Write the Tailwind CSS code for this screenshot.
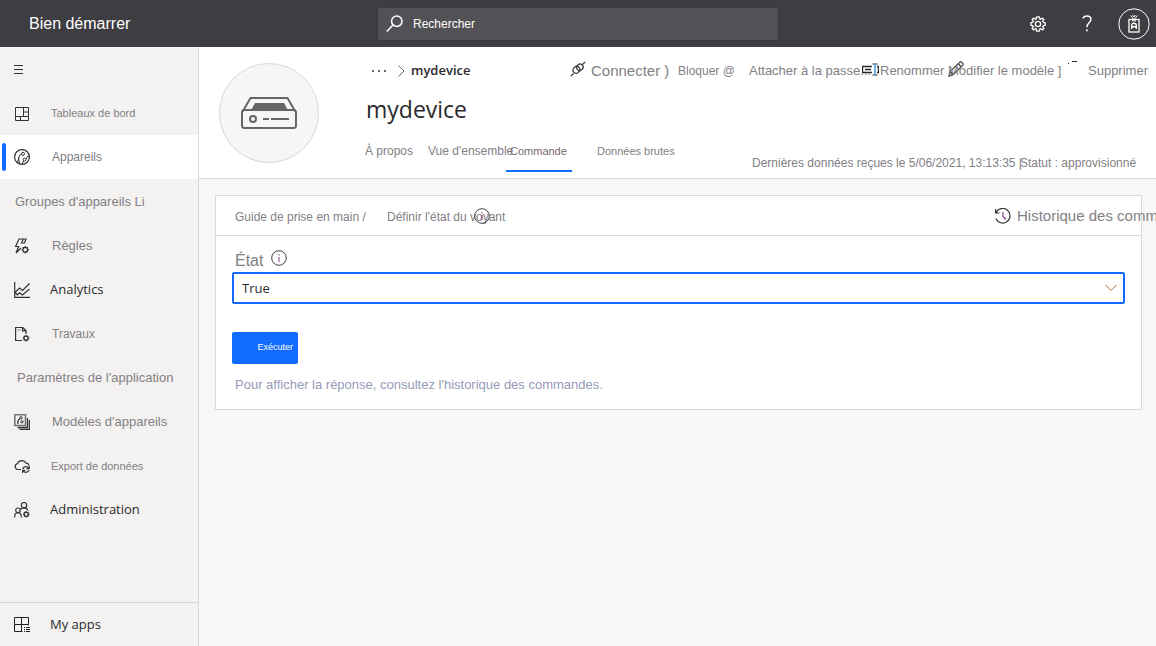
<!DOCTYPE html>
<html lang="fr">
<head>
<meta charset="utf-8">
<title>Bien démarrer</title>
<script src="https://cdn.jsdelivr.net/npm/@tailwindcss/browser@4"></script>
</head>
<body class="flex h-screen flex-col overflow-hidden bg-[#f7f7f7] font-['Liberation_Sans',sans-serif] text-[13px] whitespace-nowrap text-[#828085]">

<header class="flex h-[47px] shrink-0 items-center bg-[#3e3d41] pr-[6px] pl-[29px] text-white">
  <h1 class="w-[349px] text-base">Bien démarrer</h1>
  <label class="flex h-8 w-[400px] items-center gap-[10px] rounded-xs bg-[#525155] pl-2 shadow-sm">
    <svg class="size-[17px]" viewBox="0 0 17 17" fill="none" stroke="#fff" stroke-width="1.5" aria-hidden="true"><circle cx="10.8" cy="6.2" r="5.2"/><path d="M7 10 .8 16.4"/></svg>
    <input type="search" placeholder="Rechercher" aria-label="Rechercher" class="min-w-0 flex-1 bg-transparent text-xs outline-none placeholder:text-white">
  </label>
  <div class="ml-auto flex items-center">
    <button class="mr-9" aria-label="Paramètres">
      <svg class="size-4" viewBox="0 0 18 18" fill="none" stroke="#fff" stroke-width="1.5" stroke-linejoin="round"><path d="m7.5 1-.4 2.2-1.2.5L4 2.4 2.4 4l1.3 1.9-.5 1.2L1 7.5v3l2.2.4.5 1.2L2.4 14 4 15.6l1.9-1.3 1.2.5.4 2.2h3l.4-2.2 1.2-.5 1.9 1.3 1.6-1.6-1.3-1.9.5-1.2 2.2-.4v-3l-2.2-.4-.5-1.2L15.600 4 14 2.400l-1.900 1.300-1.200-.500L10.500 1z"/><circle cx="9" cy="9" r="3"/></svg>
    </button>
    <button class="mr-[26px]" aria-label="Aide">
      <svg class="h-[17px] w-[10px]" viewBox="0 0 10 17" fill="none" stroke="#fff" stroke-width="1.5"><path d="M1 3.500C1.500 1.800 3 .9 4.900.9c2.300 0 4 1.300 4 3.400 0 3.500-4 3.700-4 8"/><path d="M4.900 14.400v1.900" stroke-width="1.8"/></svg>
    </button>
    <button aria-label="Compte">
      <svg class="size-8" viewBox="0 0 32 32" fill="none" stroke="#fff"><circle cx="16" cy="16" r="15.2"/><rect x="11" y="11.500" width="10" height="12.500" stroke-width="1.3"/><path d="m12.500 7.500 3.500 4 3.500-4M14.500 7l1.500 2 1.500-2M14 12.800h4"/><path d="M13.700 21v-3.500c0-1.700.8-2.200 2.300-2.200s2.300.5 2.300 2.200V21M13.700 18.700h4.600" stroke-width="1.4"/></svg>
    </button>
  </div>
</header>

<div class="flex min-h-0 flex-1">
  <nav class="flex w-[199px] shrink-0 flex-col border-r border-[#dadadc] bg-[#f3f2f1]" aria-label="Navigation principale">
    <button class="flex h-11 items-center pl-[14px]" aria-label="Menu">
      <svg class="h-[11px] w-[9px]" viewBox="0 0 9 11" stroke="#333" aria-hidden="true"><path d="M0 1.500h9M0 5.500h9M0 9.500h9"/></svg>
    </button>
    <a href="#" class="flex h-11 items-center gap-[21px] pt-px pl-[14px] text-[11px]">
      <svg class="size-4" viewBox="0 0 16 16" fill="none" stroke="#333" aria-hidden="true"><path d="M1.500 1.500h13v13h-13zM1.500 10.500h13M9.500 1.500v9M9.500 6h5M6.500 10.500v4"/></svg>
      <span>Tableaux de bord</span>
    </a>
    <a href="#" aria-current="page" class="flex h-11 items-center bg-white pl-[2px] text-xs">
      <span class="h-7 w-1 rounded-sm bg-[#126bff]"></span>
      <svg class="mr-[22px] ml-2 size-4" viewBox="0 0 16 16" fill="none" stroke="#333" aria-hidden="true"><circle cx="8" cy="8" r="7.400" stroke-width="1.2"/><circle cx="9" cy="4.800" r="1.500"/><circle cx="10.500" cy="10.600" r="1.500"/><path d="M7.600 5.300C5 6 4.500 8 4.700 10.500l1 4M5 8.500l-1.500 5M12 10l1.500-2.500h2M9.500 12l-1.500 3"/></svg>
      <span>Appareils</span>
    </a>
    <h2 class="flex h-[45px] items-center pl-[15px]">Groupes d'appareils Li</h2>
    <a href="#" class="flex h-11 items-center gap-[22px] pl-[14px]">
      <svg class="size-4" viewBox="0 0 16 16" fill="none" stroke="#333" stroke-width="1.2" aria-hidden="true"><path d="M11 5h-.5L12 1H5L1.600 8.500h3L2 15l5-5M11 5H7.500L9.300 1"/><circle cx="11.200" cy="11.700" r="2.300"/><path d="M11.200 8v1.400M11.200 14v1.500M7.700 11.700h1.200M13.500 11.700h1.500M8.700 9.200l.9.900M12.800 13.300l1 1M8.700 14.200l.9-.9M12.800 10.100l1-1"/></svg>
      <span>Règles</span>
    </a>
    <a href="#" class="flex h-11 items-center gap-5 pl-[14px] font-['Open_Sans',sans-serif] text-[#2b2a2e]">
      <svg class="size-4" viewBox="0 0 16 16" fill="none" stroke="#333" stroke-width="1.2" aria-hidden="true"><path d="M.7 0v15.300H16M1 10.500 5.500 6l3 2.500L15.500 1.500M1 10.500l2.500 2.300 2-2 3 2.200 7-6"/></svg>
      <span>Analytics</span>
    </a>
    <a href="#" class="flex h-11 items-center gap-[22px] pl-[14px] text-xs">
      <svg class="size-4" viewBox="0 0 16 16" fill="none" stroke="#333" stroke-width="1.2" aria-hidden="true"><path d="M8 14.500H1.600v-13h7.200L12 4.500V8M8.500 1.500v3.300H12M3.500 4h1M5.500 4h1"/><circle cx="12" cy="12.200" r="2"/><path d="M12 9v1.200M12 14.200v1.300M8.900 12.200H10M14 12.200h1.300M9.800 10l.8.800M13.400 13.600l.8.800M9.800 14.400l.8-.8M13.400 10.800l.8-.8"/></svg>
      <span>Travaux</span>
    </a>
    <h2 class="flex h-11 items-center pl-[17px]">Paramètres de l'application</h2>
    <a href="#" class="flex h-11 items-center gap-[22px] pl-[14px]">
      <svg class="size-4" viewBox="0 0 16 16" fill="none" stroke="#333" aria-hidden="true"><path d="M.8.800h10.700v10.700H.8z" stroke="#777" stroke-width="1.6"/><circle cx="7" cy="3.800" r="1.200"/><circle cx="8" cy="7.800" r="1.200"/><path d="M6 4.500C4 5.500 3.500 7 4 10M13.500 4v9.500H3.500M15.500 6v9.500H5.500" stroke-width="1.3"/></svg>
      <span>Modèles d'appareils</span>
    </a>
    <a href="#" class="flex h-11 items-center gap-[21px] pl-[14px] text-[11px]">
      <svg class="size-4" viewBox="0 0 16 16" fill="none" stroke="#333" stroke-width="1.2" aria-hidden="true"><path d="M7 11.500H3.800A3 3 0 0 1 3.500 5.600 4.600 4.600 0 0 1 12 5.200a3 3 0 0 1 3 2.500"/><path d="M8.800 11c.4-1.500 1.700-2.300 3-2.300 1.200 0 2.200.5 2.800 1.600M15.200 8v2.700h-2.700M15 12c-.5 1.500-1.700 2.300-3 2.300-1.200 0-2.200-.6-2.800-1.600M8.600 15v-2.700h2.700"/></svg>
      <span>Export de données</span>
    </a>
    <a href="#" class="flex h-11 items-center gap-5 pl-[14px] font-['Open_Sans',sans-serif] text-[#2b2a2e]">
      <svg class="size-4" viewBox="0 0 16 16" fill="none" stroke="#333" stroke-width="1.2" aria-hidden="true"><circle cx="10" cy="3.200" r="2.700"/><circle cx="4" cy="8.300" r="2.300"/><path d="M.6 15.500c0-3.200 1.200-4.800 3.400-4.800s3.400 1.600 3.400 4.800M6.500 7.500C7.500 6.300 8.600 5.900 10 5.900c2 0 3.300 1 3.800 2.600"/><circle cx="12.200" cy="12.300" r="2"/><path d="M12.200 9v1.300M12.200 14.300v1.300M9 12.300h1.200M14.200 12.300h1.400M9.900 10l.9.900M13.600 13.700l.9.900M9.900 14.600l.9-.9M13.600 10.900l.9-.9"/></svg>
      <span>Administration</span>
    </a>
    <a href="#" class="mt-auto flex h-11 items-center gap-5 border-t border-[#d6d5d6] pt-px pl-[14px] font-['Open_Sans',sans-serif] text-[#2b2a2e]">
      <svg class="size-4" viewBox="0 0 16 16" fill="none" stroke="#222" aria-hidden="true"><path d="M8.500 14.500h-8v-14h14v7h-14M7.500.5v14M14.500 7.500v1M10 10.500h1M12 10.500h4M10 12.500h1M12 12.500h4M10 14.500h1M12 14.500h4"/></svg>
      <span>My apps</span>
    </a>
  </nav>

  <main class="flex min-w-0 flex-1 flex-col">
    <section class="flex h-[132px] shrink-0 border-b border-[#dadadc] bg-white pl-5">
      <div class="mt-4 flex size-[100px] shrink-0 items-center justify-center rounded-full border border-[#d8d8d8] bg-[#f6f6f6]">
        <svg class="h-8 w-14" viewBox="0 0 56 32" fill="none" stroke="#666" stroke-width="2" aria-hidden="true"><rect x="1" y="13" width="54" height="18" rx="2.500"/><path d="M2 14 9.500 1h37L54 14"/><path d="M10 13.500 14 6h29l4 7.500z" fill="#666" stroke="none"/><circle cx="12" cy="22" r="3"/><path d="M22 22h6M30 22h18"/></svg>
      </div>
      <div class="ml-[46px] flex min-w-0 flex-1 flex-col">
        <div class="flex h-[46px] items-center pt-[2px]">
          <div class="flex items-center pl-[6px] font-['Open_Sans',sans-serif]">
            <button aria-label="Plus">
              <svg class="h-1 w-4" viewBox="0 0 16 4" fill="#666"><path d="M1 1h2v2H1zM7 1h2v2H7zM13 1h2v2h-2z"/></svg>
            </button>
            <svg class="ml-[11px] h-3 w-[7px]" viewBox="0 0 7 12" fill="none" stroke="#666" aria-hidden="true"><path d="m.5.500 5.500 5.500L.5 11.500"/></svg>
            <a href="#" class="ml-[6px] font-semibold text-[#2b2a2e]">mydevice</a>
          </div>
          <div class="ml-auto flex items-center">
            <button class="flex w-[108px] items-center gap-[5px] text-[15px]">
              <svg class="-mt-1 size-4" viewBox="0 0 16 16" fill="none" stroke="#333" stroke-width="1.2" aria-hidden="true"><path d="M.8 15.200 3.500 12.500M12.500 3.500 15.200.8"/><rect x="3.300" y="6.300" width="7" height="6" rx="2.600" transform="rotate(-45 6 9.500)"/><rect x="6.500" y="3.300" width="6.500" height="6" rx="2.600" transform="rotate(-45 9.800 6.200)"/></svg>
              <span>Connecter )</span>
            </button>
            <button class="w-[71px] text-left text-xs">Bloquer @</button>
            <button class="w-[113px] text-left">Attacher à la passe...</button>
            <button class="flex w-[86px] items-center gap-[1px]">
              <svg class="-mt-1 h-[13px] w-[17px] shrink-0" viewBox="0 0 17 13" fill="none" stroke="#2b2b2b" aria-hidden="true"><path d="M10 3.500H.5v6H10M15 3.500h1.500v6H15M3 6.500h6" stroke-width="1.4"/><path d="M10.500 1h5M10.500 12h5"/><path d="M13 1v11" stroke="#3b9be0" stroke-width="1.5"/></svg>
              <span>Renommer</span>
            </button>
            <button class="flex w-[119px] items-center">
              <svg class="-mt-1 -mr-4 size-4 shrink-0" viewBox="0 0 16 16" fill="none" stroke="#444" stroke-width="1.3" aria-hidden="true"><path d="m1 15 1.200-4.500L12 .9c1-.8 3.800 1.700 3 3L5.200 13.700zM2.200 10.500l3 3.200M10.200 2.800l3 3"/></svg>
              <span>Modifier le modèle ]</span>
            </button>
            <button class="flex w-[89px] items-center gap-[9px]">
              <svg class="-mt-4 h-1 w-3 shrink-0" viewBox="0 0 12 4" fill="#333" aria-hidden="true"><path d="M1 2h1v1H1zM5 0h5v1H5z"/></svg>
              <span>Supprimer</span>
            </button>
          </div>
        </div>
        <h2 class="pl-px font-['Open_Sans',sans-serif] text-[23px] leading-8 text-[#2b2a2e]">mydevice</h2>
        <div class="mt-[10px] flex h-[38px]">
          <div class="flex text-[11px]">
            <a href="#" class="w-[63px] pt-2 text-xs leading-4">À propos</a>
            <a href="#" class="w-[78px] pt-2 text-xs leading-4">Vue d'ensemble</a>
            <a href="#" aria-current="page" class="h-[37px] w-[66px] border-b-2 border-[#126bff] pt-2 pl-1 leading-4 text-[#77696e]">Commande</a>
            <a href="#" class="ml-[25px] pt-2 leading-4">Données brutes</a>
          </div>
          <div class="ml-auto flex pt-5 text-xs leading-4">
            <p class="w-[268px]">Dernières données reçues le 5/06/2021, 13:13:35 |</p>
            <p class="w-[136px]">Statut : approvisionné</p>
          </div>
        </div>
      </div>
    </section>

    <section class="mt-4 mr-[14px] ml-4 border border-[#dadadc] bg-white">
      <div class="flex h-10 items-center border-b border-[#dadadc] pt-[2px] pl-[19px]">
        <a href="#" class="w-[152px] text-xs">Guide de prise en main /</a>
        <h3 class="flex items-center text-xs">
          <span>Définir l'état du voyant</span>
          <svg class="-mt-[2px] -ml-[31px] size-4" viewBox="0 0 16 16" fill="none" stroke="#444" aria-hidden="true"><circle cx="8" cy="8" r="7.300"/><path d="M8 7v5M8 4v1.500" stroke="#804080"/></svg>
        </h3>
        <button class="ml-auto flex w-[146px] items-center gap-[6px] text-[15px]">
          <svg class="-mt-[2px] size-4 shrink-0" viewBox="0 0 16 16" fill="none" stroke="#333" stroke-width="1.2" aria-hidden="true"><path d="M1 4.800A7.300 7.300 0 1 1 .9 10.500M.6 1v4h4"/><path d="M8 4v4.500l3 3" stroke="#804080"/></svg>
          <span>Historique des comm</span>
        </button>
      </div>
      <form class="px-4 pb-4">
        <div class="flex h-9 items-center gap-2 pl-[3px]">
          <label for="etat" class="pt-[14px] text-base leading-5">État</label>
          <svg class="mt-2 size-4" viewBox="0 0 16 16" fill="none" stroke="#444" aria-hidden="true"><circle cx="8" cy="8" r="7.300"/><path d="M8 7v5M8 4v1.500" stroke="#804080"/></svg>
        </div>
        <div class="relative">
          <select id="etat" class="h-8 w-full appearance-none rounded-xs border-2 border-[#126bff] bg-white px-2 pt-[2px] font-['Open_Sans',sans-serif] text-[13px] text-[#2b2a2e] outline-none">
            <option>True</option>
            <option>False</option>
          </select>
          <svg class="pointer-events-none absolute top-3 right-2 h-2 w-3" viewBox="0 0 12 8" fill="none" stroke="#b0703c" aria-hidden="true"><path d="m.5 1 5.500 5.500L11.500 1"/></svg>
        </div>
        <button type="button" class="mt-7 block h-8 w-[66px] rounded-xs bg-[#126bff] pr-[5px] text-right text-[9px] text-white">Exécuter</button>
        <p class="mt-[13px] pl-[3px] leading-4 text-[#969ab8]">Pour afficher la réponse, consultez l'historique des commandes.</p>
      </form>
    </section>
  </main>
</div>
</body>
</html>
